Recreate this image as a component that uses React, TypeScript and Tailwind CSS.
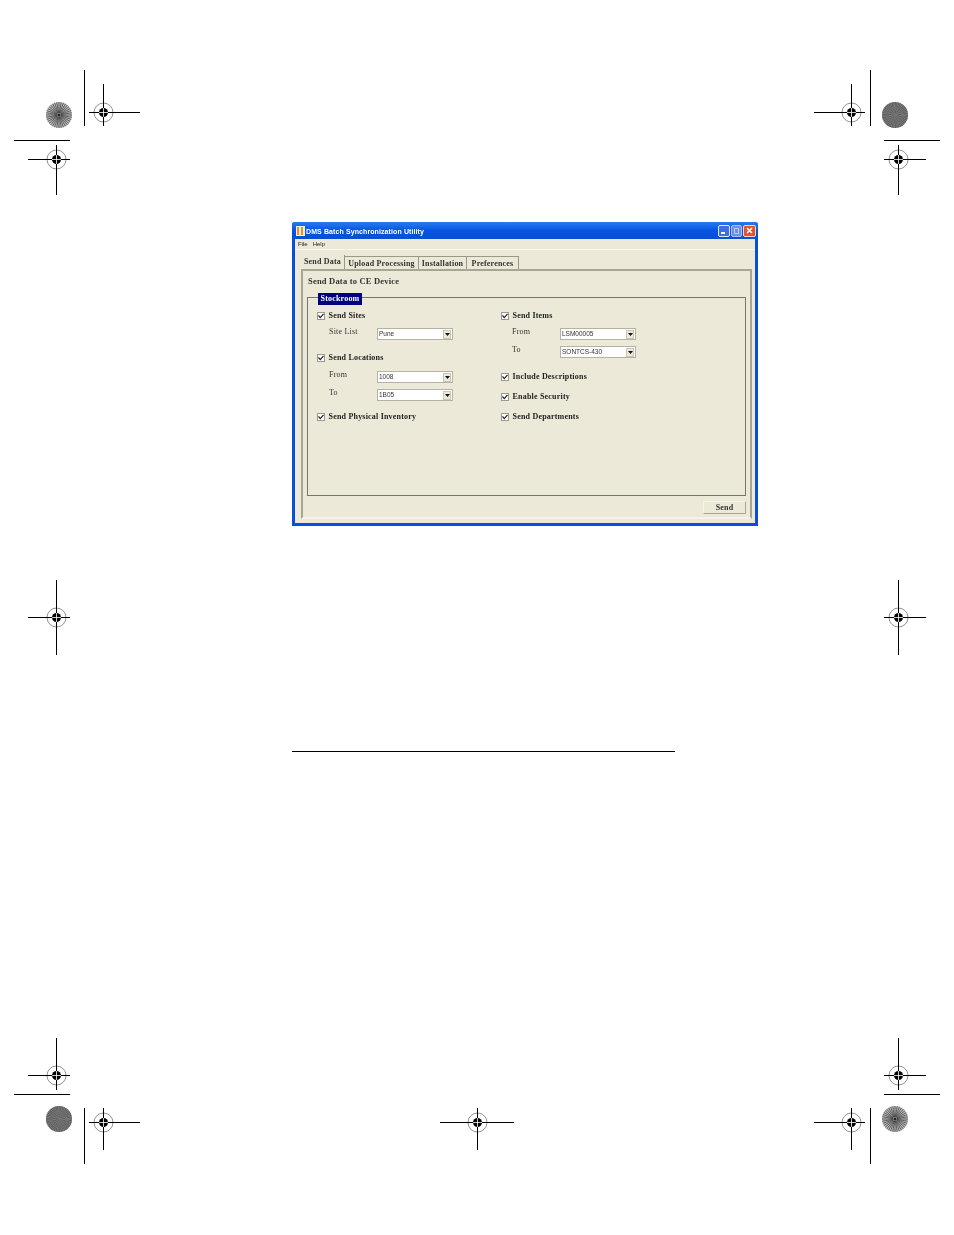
import React from "react";

const serif = "font-['Liberation_Serif',serif]";

// printer's registration marks: [cx, cy, x1, x2, y1, y2]
const marks = [
  [103, 112, 89, 140, 84, 126],
  [56, 159, 28, 70, 145, 195],
  [851, 112, 814, 865, 84, 126],
  [898, 159, 884, 926, 145, 195],
  [56, 617, 28, 70, 580, 655],
  [898, 617, 884, 926, 580, 655],
  [56, 1075, 28, 70, 1038, 1090],
  [103, 1122, 89, 140, 1108, 1150],
  [477, 1122, 440, 514, 1108, 1150],
  [851, 1122, 814, 865, 1108, 1150],
  [898, 1075, 884, 926, 1038, 1090],
];

const bars = [
  [84, 70, 84, 126],
  [14, 140, 70, 140],
  [870, 70, 870, 126],
  [884, 140, 940, 140],
  [14, 1094, 70, 1094],
  [84, 1108, 84, 1164],
  [870, 1108, 870, 1164],
  [884, 1094, 940, 1094],
];

const Disc = ({ cx, cy, dark }: { cx: number; cy: number; dark?: boolean }) => {
  const count = dark ? 90 : 36;
  const spokes = Array.from({ length: count }, (_, i) => (i * Math.PI * 2) / count);
  return (
    <g>
      <circle cx={cx} cy={cy} r={13} fill={dark ? "#666" : "#b8b8b8"} />
      {spokes.map((a, i) => (
        <line
          key={i}
          x1={cx + Math.cos(a) * (dark ? (i % 3) * 3 : 2)}
          y1={cy + Math.sin(a) * (dark ? (i % 3) * 3 : 2)}
          x2={cx + Math.cos(a) * 13}
          y2={cy + Math.sin(a) * 13}
          stroke={dark ? (i % 2 ? "#969696" : "#4a4a4a") : "#3c3c3c"}
          strokeWidth={dark ? 0.5 : 0.7}
        />
      ))}
      {!dark && <circle cx={cx} cy={cy} r={1.5} fill="#222" />}
    </g>
  );
};

const PrintMarks = () => (
  <svg className="absolute left-0 top-0" width={954} height={1235}>
    {bars.map(([x1, y1, x2, y2], i) => (
      <line
        key={i}
        x1={x1 === x2 ? x1 + 0.5 : x1}
        y1={y1 === y2 ? y1 + 0.5 : y1}
        x2={x1 === x2 ? x2 + 0.5 : x2}
        y2={y1 === y2 ? y2 + 0.5 : y2}
        stroke="#000"
      />
    ))}
    {marks.map(([cx, cy, x1, x2, y1, y2], i) => (
      <g key={i}>
        <circle cx={cx + 0.5} cy={cy + 0.5} r={9.5} fill="none" stroke="#777" strokeWidth={0.8} />
        <circle cx={cx + 0.5} cy={cy + 0.5} r={4.5} fill="#000" />
        <line x1={x1} y1={cy + 0.5} x2={x2} y2={cy + 0.5} stroke="#000" />
        <line x1={cx + 0.5} y1={y1} x2={cx + 0.5} y2={y2} stroke="#000" />
        <line x1={cx - 4} y1={cy + 0.5} x2={cx + 5} y2={cy + 0.5} stroke="#fff" strokeWidth={0.8} />
        <line x1={cx + 0.5} y1={cy - 4} x2={cx + 0.5} y2={cy + 5} stroke="#fff" strokeWidth={0.8} />
      </g>
    ))}
    <Disc cx={59} cy={115} />
    <Disc cx={895} cy={115} dark />
    <Disc cx={59} cy={1119} dark />
    <Disc cx={895} cy={1119} />
  </svg>
);

const Check = ({ label, className = "" }: { label: string; className?: string }) => (
  <div className={`flex h-[12px] items-center ${className}`}>
    <span className="flex h-[8px] w-[8px] shrink-0 items-center justify-center border border-[#9a9a90] bg-white">
      <svg width="6" height="6" viewBox="0 0 6 6">
        <path d="M0.5 2.5 L2.3 4.6 L5.5 0.8" fill="none" stroke="#222" strokeWidth="1.2" />
      </svg>
    </span>
    <span className={`ml-[3.5px] whitespace-nowrap text-[8px] font-bold tracking-[0.2px] text-[#222] ${serif}`}>{label}</span>
  </div>
);

const Combo = ({ label, value, className = "" }: { label: string; value: string; className?: string }) => (
  <div className={`flex ${className}`}>
    <span className={`-mt-[1px] w-[48px] text-[8px] leading-[10px] tracking-[0.2px] text-[#333] ${serif}`}>{label}</span>
    <div className="flex h-[12px] w-[76px] items-center justify-between border border-[#b5b2a4] bg-white pl-[1px] pr-[1px]">
      <span className="font-['Liberation_Sans',sans-serif] text-[6.5px] text-[#333]">{value}</span>
      <span className="flex h-[9px] w-[8px] items-center justify-center border border-[#c9c6b8] bg-[#ece9d8]">
        <svg width="5" height="3" viewBox="0 0 5 3">
          <path d="M0 0 H5 L2.5 3 Z" fill="#111" />
        </svg>
      </span>
    </div>
  </div>
);

const tabs = [
  { name: "Upload Processing", w: "w-[74px]" },
  { name: "Installation", w: "w-[48px]" },
  { name: "Preferences", w: "w-[52px]" },
];

const App: React.FC = () => {
  return (
    <div className="relative h-[1235px] w-[954px] overflow-hidden bg-white pl-[292px] pt-[222px]">
      <PrintMarks />
      <div className="relative flex h-[304px] w-[466px] flex-col rounded-t-[3px] border-x-[3px] border-b-[3px] border-[#0a4fd8] bg-[#ece9d8] blur-[0.3px]">
        {/* title bar */}
        <div className="-mx-[3px] flex h-[17px] shrink-0 items-center rounded-t-[3px] bg-gradient-to-b from-[#2a7bf0] via-[#0554e3] to-[#0a50d0] pl-[4px] pr-[2px]">
          <svg width="9" height="10" viewBox="0 0 9 10" className="shrink-0">
            <rect width="9" height="10" fill="#f4f0e0" />
            <rect x="1" y="1" width="2" height="8" fill="#e8941a" />
            <rect x="5" y="1" width="2" height="8" fill="#e8941a" />
          </svg>
          <span className="ml-[1px] mt-[3px] whitespace-nowrap font-['Liberation_Sans',sans-serif] text-[7px] font-bold tracking-[0.1px] text-white">
            DMS Batch Synchronization Utility
          </span>
          <div className="ml-auto flex gap-[1px]">
            <span className="relative h-[12px] w-[12px] rounded-[2px] border border-[#dfe8fb] bg-[#3d6fe0]">
              <span className="absolute bottom-[2px] left-[2px] h-[2px] w-[4px] bg-white" />
            </span>
            <span className="relative h-[12px] w-[11px] rounded-[2px] border border-[#a9bff0] bg-[#6d90e4]">
              <span className="absolute left-[2px] top-[2px] h-[6px] w-[5px] border border-[#b9cbf2]" />
            </span>
            <span className="flex h-[12px] w-[13px] items-center justify-center rounded-[2px] border border-[#f0d8d0] bg-[#e0532c]">
              <svg width="7" height="7" viewBox="0 0 7 7">
                <path d="M1 1 L6 6 M6 1 L1 6" stroke="#fff" strokeWidth="1.5" />
              </svg>
            </span>
          </div>
        </div>

        {/* menu */}
        <div className="flex h-[11px] shrink-0 items-center gap-[5px] border-b border-[#f8f6ee] pl-[3px] font-['Liberation_Sans',sans-serif] text-[6px] text-[#222]">
          <span>File</span>
          <span>Help</span>
        </div>

        {/* tabs */}
        <div className="ml-[6px] mt-[4px] flex h-[15px] shrink-0 items-end">
          <div className={`flex h-[14px] w-[44px] items-center justify-center border-r border-[#9b9888] text-[8px] font-bold tracking-[0.2px] text-[#333] ${serif}`}>
            Send Data
          </div>
          {tabs.map((t) => (
            <div
              key={t.name}
              className={`flex h-[13px] items-center justify-center border-r border-t border-[#9b9888] pt-[1px] text-[8px] font-bold tracking-[0.2px] text-[#333] ${t.w} ${serif}`}
            >
              {t.name}
            </div>
          ))}
        </div>

        {/* panel */}
        <div className="ml-[6px] flex h-[250px] w-[451px] shrink-0 flex-col border-2 border-[#a8a595] border-b-[#f6f4ea] pl-[4px] pr-[4px]">
          <div className={`mt-[5px] h-[10px] text-[8.5px] font-bold leading-[10px] tracking-[0.2px] text-[#333] pl-[1px] ${serif}`}>
            Send Data to CE Device
          </div>
          <div className="relative mt-[11px] grid h-[199px] w-[439px] shrink-0 grid-cols-[193px_1fr] border border-[#77766a] pt-[12px]">
            <div className={`absolute -top-[5px] left-[10px] flex h-[12px] w-[44px] items-center justify-center bg-[#000080] text-[8px] font-bold tracking-[0.2px] text-white ${serif}`}>
              Stockroom
            </div>
            <div className="pl-[9px]">
              <Check label="Send Sites" />
              <Combo label="Site List" value="Pune" className="ml-[12px] mt-[6px]" />
              <Check label="Send Locations" className="mt-[12px]" />
              <Combo label="From" value="1008" className="ml-[12px] mt-[7px]" />
              <Combo label="To" value="1B05" className="ml-[12px] mt-[6px]" />
              <Check label="Send Physical Inventory" className="mt-[10px]" />
            </div>
            <div>
              <Check label="Send Items" />
              <Combo label="From" value="LSM00005" className="ml-[11px] mt-[6px]" />
              <Combo label="To" value="SONTCS-430" className="ml-[11px] mt-[6px]" />
              <Check label="Include Descriptions" className="mt-[13px]" />
              <Check label="Enable Security" className="mt-[8px]" />
              <Check label="Send Departments" className="mt-[8px]" />
            </div>
          </div>
          <div className="mt-[5px] flex w-[439px] justify-end">
            <button className={`h-[13px] w-[43px] rounded-[1px] border border-[#f6f4ea] border-b-[#a8a595] border-r-[#a8a595] text-[8px] font-bold tracking-[0.2px] text-[#333] ${serif}`}>
              Send
            </button>
          </div>
        </div>
      </div>

      {/* rule under the figure */}
      <div className="mt-[225px] h-px w-[383px] bg-black" />
    </div>
  );
};

export default App;
